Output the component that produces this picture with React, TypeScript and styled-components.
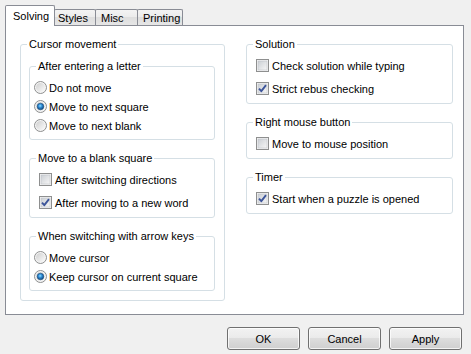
import React from "react";
import styled, { createGlobalStyle } from "styled-components";

const Global = createGlobalStyle`
  html, body { margin: 0; padding: 0; }
  body {
    background: #f0f0f0;
    font-family: "Liberation Sans", Arial, sans-serif;
    font-size: 11px;
    color: #000;
  }
  * { box-sizing: border-box; }
`;

const Window = styled.div`
  width: 471px;
  height: 354px;
  padding-top: 5px;
  display: flex;
  flex-direction: column;
`;

const TabStrip = styled.div`
  display: flex;
  align-items: flex-end;
  height: 20px;
  margin-left: 5px;
`;

const Tab = styled.div<{ $w: number; $active?: boolean; $pl: number }>`
  position: relative;
  width: ${(p) => p.$w}px;
  height: ${(p) => (p.$active ? 21 : 16)}px;
  margin-bottom: ${(p) => (p.$active ? -1 : 0)}px;
  margin-left: ${(p) => (p.$active ? 0 : -1)}px;
  z-index: ${(p) => (p.$active ? 2 : 1)};
  border: 1px solid #898c95;
  border-bottom: none;
  border-radius: 2px 2px 0 0;
  background: ${(p) =>
    p.$active ? "#ffffff" : "linear-gradient(#f3f3f3, #ebebeb 50%, #dedede 50%, #e6e6e6)"};
  padding-left: ${(p) => p.$pl}px;
  padding-top: ${(p) => (p.$active ? 3 : 1)}px;
  line-height: 14px;
  white-space: nowrap;
`;

const Panel = styled.div`
  margin-left: 5px;
  width: 459px;
  height: 290px;
  background: #ffffff;
  border: 1px solid #898c95;
  padding: 11px 10px 0 14px;
  display: flex;
  gap: 21px;
  align-items: flex-start;
`;

const LeftColumn = styled.div`
  width: 205px;
`;

const RightColumn = styled.div`
  width: 207px;
  display: flex;
  flex-direction: column;
  gap: 11px;
`;

const Group = styled.fieldset`
  margin: 0;
  padding: 0;
  min-width: 0;
  border: 1px solid #d5dfe5;
  border-radius: 3px;
`;

const Caption = styled.legend`
  margin-left: 6px;
  padding: 0 2px;
  font-size: 11px;
  line-height: 14px;
  color: #000;
`;

const GroupBody = styled.div<{ $pad: string; $gap?: number }>`
  padding: ${(p) => p.$pad};
  display: flex;
  flex-direction: column;
  gap: ${(p) => p.$gap ?? 0}px;
`;

const OptionRow = styled.label<{ $h: number; $gap: number }>`
  display: flex;
  align-items: center;
  height: ${(p) => p.$h}px;
  gap: ${(p) => p.$gap}px;
  white-space: nowrap;
  line-height: 14px;
`;

const ButtonBar = styled.div`
  display: flex;
  justify-content: flex-end;
  gap: 8px;
  padding-right: 9px;
  margin-top: 12px;
`;

const Button = styled.div`
  width: 73px;
  height: 23px;
  border: 1px solid #707070;
  border-radius: 3px;
  background: linear-gradient(#f2f2f2 0%, #ebebeb 45%, #dddddd 50%, #cfcfcf 100%);
  box-shadow: inset 0 0 0 1px rgba(255, 255, 255, 0.75);
  display: flex;
  align-items: center;
  justify-content: center;
  line-height: 14px;
`;

const Radio = ({ checked }: { checked?: boolean }) => (
  <svg width="13" height="13" viewBox="0 0 13 13" style={{ flex: "none" }}>
    <defs>
      <linearGradient id="rbg" x1="0" y1="0" x2="1" y2="1">
        <stop offset="0" stopColor="#cfcfcf" />
        <stop offset="1" stopColor="#fbfbfb" />
      </linearGradient>
      <radialGradient id="rdot" cx="0.45" cy="0.4" r="0.6">
        <stop offset="0" stopColor="#8fe0ff" />
        <stop offset="0.45" stopColor="#2f8ad4" />
        <stop offset="1" stopColor="#10477a" />
      </radialGradient>
    </defs>
    <circle cx="6.5" cy="6.5" r="6" fill="#f4f4f4" stroke="#8e8f8f" strokeWidth="1" />
    <circle cx="6.5" cy="6.5" r="4.5" fill="url(#rbg)" />
    {checked && <circle cx="6.5" cy="6.5" r="3.3" fill="url(#rdot)" stroke="#1c4f7d" strokeWidth="0.6" />}
  </svg>
);

const Check = ({ checked }: { checked?: boolean }) => (
  <svg width="13" height="13" viewBox="0 0 13 13" style={{ flex: "none" }}>
    <defs>
      <linearGradient id="cbg" x1="0" y1="0" x2="1" y2="1">
        <stop offset="0" stopColor="#cbcfd4" />
        <stop offset="1" stopColor="#f7f7f7" />
      </linearGradient>
    </defs>
    <rect x="0.5" y="0.5" width="12" height="12" fill="#f4f4f4" stroke="#8e8f8f" />
    <rect x="2" y="2" width="9" height="9" fill="url(#cbg)" stroke="#b9bcc1" strokeWidth="0.5" />
    {checked && (
      <path d="M3 6.6 L5.3 9.2 L10 3.2" fill="none" stroke="#3d559a" strokeWidth="1.9" strokeLinejoin="round" />
    )}
  </svg>
);

const RadioOption = ({ label, checked }: { label: string; checked?: boolean }) => (
  <OptionRow $h={19} $gap={2}>
    <Radio checked={checked} />
    <span>{label}</span>
  </OptionRow>
);

const CheckOption = ({ label, checked }: { label: string; checked?: boolean }) => (
  <OptionRow $h={23} $gap={3}>
    <Check checked={checked} />
    <span>{label}</span>
  </OptionRow>
);

const RadioGroup = ({ title, children }: { title: string; children: React.ReactNode }) => (
  <Group>
    <Caption>{title}</Caption>
    <GroupBody $pad="5px 4px 4px 4px">{children}</GroupBody>
  </Group>
);

const CheckGroup = ({ title, children }: { title: string; children: React.ReactNode }) => (
  <Group>
    <Caption>{title}</Caption>
    <GroupBody $pad="3px 8px 3px 9px">{children}</GroupBody>
  </Group>
);

const tabs = [
  { label: "Solving", w: 50, pl: 7, active: true },
  { label: "Styles", w: 42, pl: 3 },
  { label: "Misc", w: 43, pl: 5 },
  { label: "Printing", w: 46, pl: 5 },
];

export default function App() {
  return (
    <>
      <Global />
      <Window>
        <TabStrip>
          {tabs.map((t) => (
            <Tab key={t.label} $w={t.w} $pl={t.pl} $active={t.active}>
              {t.label}
            </Tab>
          ))}
        </TabStrip>
        <Panel>
          <LeftColumn>
            <Group>
              <Caption>Cursor movement</Caption>
              <GroupBody $pad="8px 9px 9px 8px" $gap={11}>
                <RadioGroup title="After entering a letter">
                  <RadioOption label="Do not move" />
                  <RadioOption label="Move to next square" checked />
                  <RadioOption label="Move to next blank" />
                </RadioGroup>
                <CheckGroup title="Move to a blank square">
                  <CheckOption label="After switching directions" />
                  <CheckOption label="After moving to a new word" checked />
                </CheckGroup>
                <RadioGroup title="When switching with arrow keys">
                  <RadioOption label="Move cursor" />
                  <RadioOption label="Keep cursor on current square" checked />
                </RadioGroup>
              </GroupBody>
            </Group>
          </LeftColumn>
          <RightColumn>
            <CheckGroup title="Solution">
              <CheckOption label="Check solution while typing" />
              <CheckOption label="Strict rebus checking" checked />
            </CheckGroup>
            <CheckGroup title="Right mouse button">
              <CheckOption label="Move to mouse position" />
            </CheckGroup>
            <CheckGroup title="Timer">
              <CheckOption label="Start when a puzzle is opened" checked />
            </CheckGroup>
          </RightColumn>
        </Panel>
        <ButtonBar>
          <Button>OK</Button>
          <Button>Cancel</Button>
          <Button>Apply</Button>
        </ButtonBar>
      </Window>
    </>
  );
}
